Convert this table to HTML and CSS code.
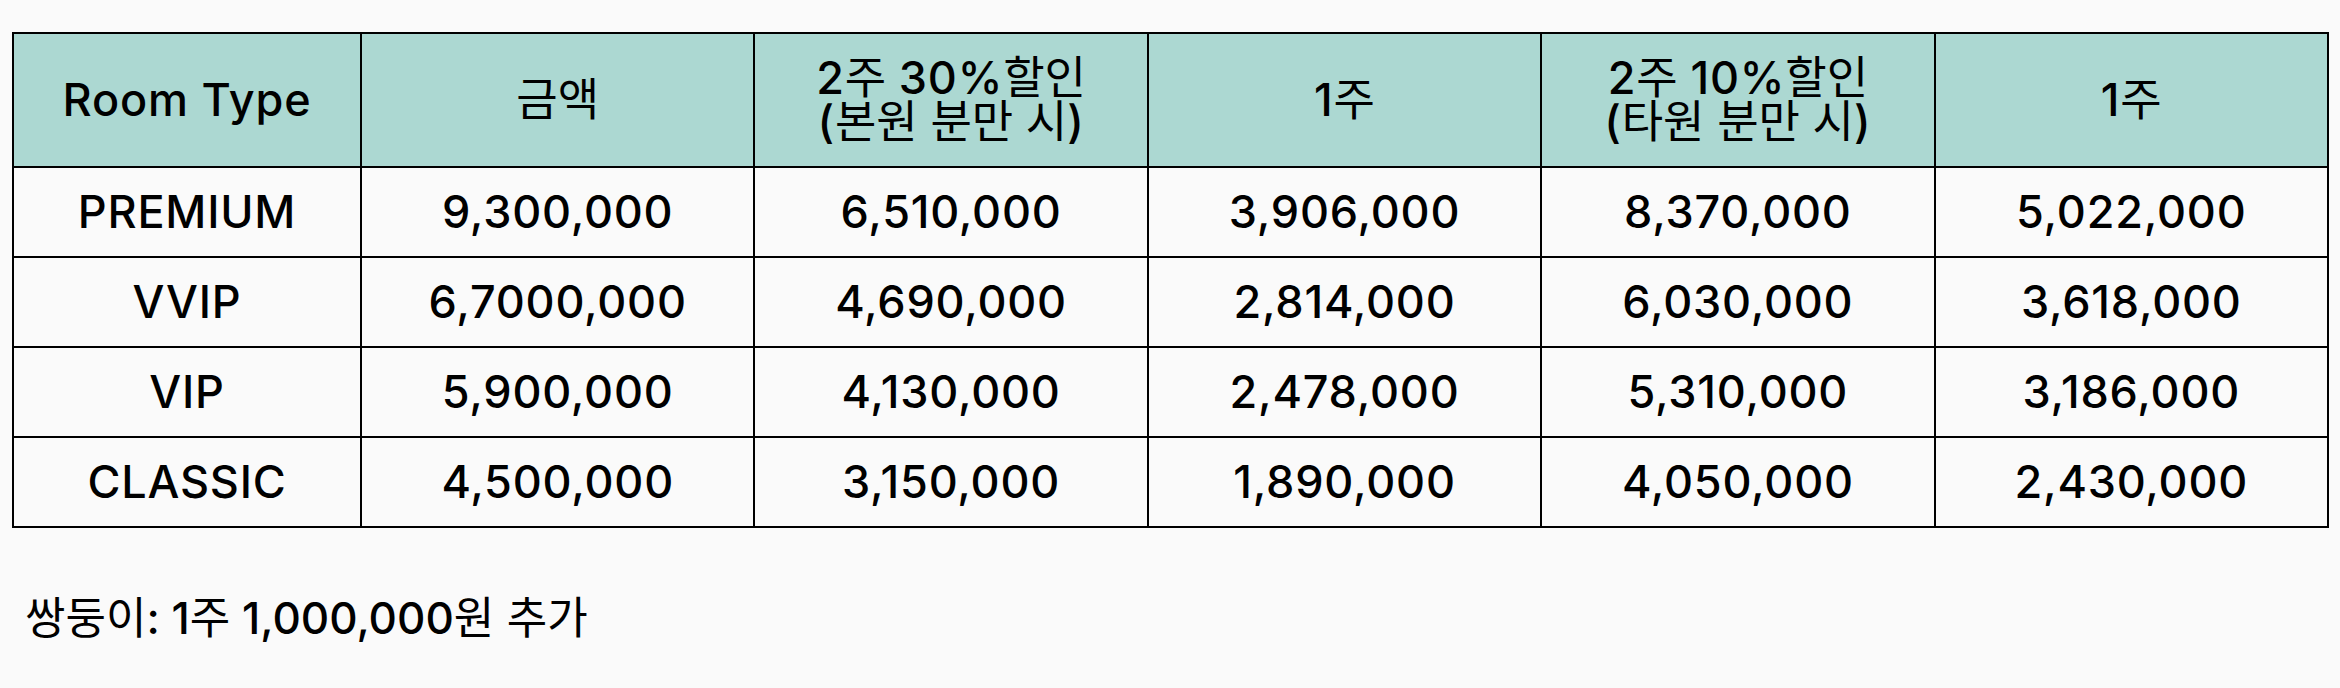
FILE: index.html
```html
<!DOCTYPE html>
<html lang="ko">
<head>
<meta charset="utf-8">
<title>Room Price</title>
<link rel="stylesheet" href="styles.css">
</head>
<body>
<main class="page">
  <table class="price-table">
    <colgroup>
      <col class="col-type">
      <col><col><col><col><col>
    </colgroup>
    <thead>
      <tr>
        <th>Room Type</th>
        <th><span class="ko">금액</span></th>
        <th>2<span class="ko">주</span> 30%<span class="ko">할인</span><br>(<span class="ko">본원 분만 시</span>)</th>
        <th>1<span class="ko">주</span></th>
        <th>2<span class="ko">주</span> 10%<span class="ko">할인</span><br>(<span class="ko">타원 분만 시</span>)</th>
        <th>1<span class="ko">주</span></th>
      </tr>
    </thead>
    <tbody>
      <tr><td>PREMIUM</td><td>9,300,000</td><td>6,510,000</td><td>3,906,000</td><td>8,370,000</td><td>5,022,000</td></tr>
      <tr><td>VVIP</td><td>6,7000,000</td><td>4,690,000</td><td>2,814,000</td><td>6,030,000</td><td>3,618,000</td></tr>
      <tr><td>VIP</td><td>5,900,000</td><td>4,130,000</td><td>2,478,000</td><td>5,310,000</td><td>3,186,000</td></tr>
      <tr><td>CLASSIC</td><td>4,500,000</td><td>3,150,000</td><td>1,890,000</td><td>4,050,000</td><td>2,430,000</td></tr>
    </tbody>
  </table>
  <p class="note"><span class="ko">쌍둥이</span>: 1<span class="ko">주</span> 1,000,000<span class="ko">원 추가</span></p>
</main>
</body>
</html>
```

FILE: styles.css
```css
html, body {
  margin: 0;
  padding: 0;
  background: #fafafa;
}

body {
  font-family: Inter, "Noto Sans CJK KR", sans-serif;
  color: #000;
}

.page {
  padding: 32px 11px 0 12px;
}

.price-table {
  width: 100%;
  border-collapse: collapse;
  table-layout: fixed;
}

.col-type {
  width: 348px;
}

.price-table th,
.price-table td {
  border: 2px solid #000;
  text-align: center;
  vertical-align: middle;
  font-weight: 500;
  font-size: 45px;
  letter-spacing: 0.8px;
  padding: 0;
}

.price-table th {
  background: #acd8d2;
  height: 132px;
  line-height: 44px;
}

.price-table td {
  height: 88px;
  line-height: 44px;
}

.ko {
  font-weight: 400;
  letter-spacing: 0;
}

.note {
  margin: 60px 0 0 13px;
  font-size: 44px;
  font-weight: 500;
  letter-spacing: 0;
  line-height: 60px;
}
```
